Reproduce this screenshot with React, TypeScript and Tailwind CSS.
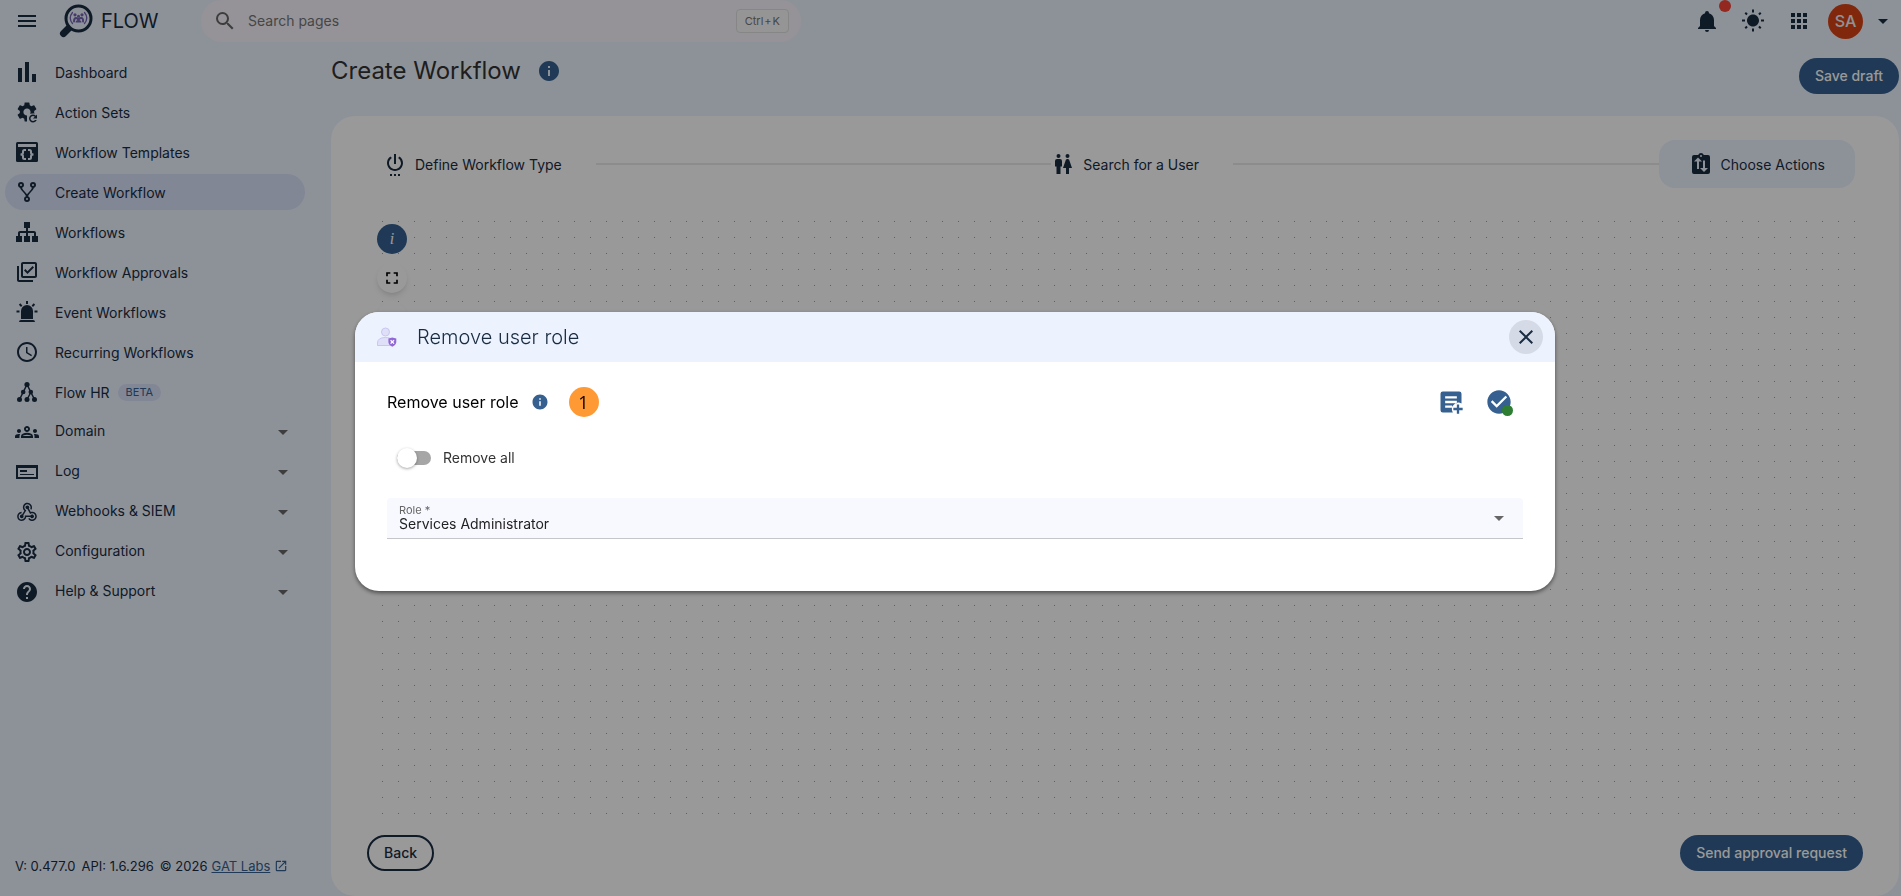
import { useState, type ReactNode } from "react";
import {
  MdAccessTime,
  MdApps,
  MdArrowDropDown,
  MdCheckCircle,
  MdClose,
  MdFullscreen,
  MdHelp,
  MdInfo,
  MdMenu,
  MdOpenInNew,
  MdOutlineGroups,
  MdOutlineLibraryAddCheck,
  MdOutlineSettings,
  MdSearch,
  MdSettings,
  MdSettingsPower,
  MdWbSunny,
} from "react-icons/md";

type NavItem = {
  label: string;
  icon: ReactNode;
  active?: boolean;
  badge?: string;
  expandable?: boolean;
};

function Icon({ d, className = "size-6" }: { d: string; className?: string }) {
  return (
    <svg viewBox="0 0 24 24" fill="currentColor" className={className} aria-hidden="true">
      <path fillRule="evenodd" d={d} />
    </svg>
  );
}

const paths = {
  poll: "M3,22V8H7V22H3M10,22V2H14V22H10M17,22V14H21V22H17Z",
  fork: "M6,2A3,3 0 0,1 9,5C9,6.28 8.19,7.38 7.06,7.81C7.15,8.27 7.39,8.83 8,9.63C9,10.92 11,12.83 12,14.17C13,12.83 15,10.92 16,9.63C16.61,8.83 16.85,8.27 16.94,7.81C15.81,7.38 15,6.28 15,5A3,3 0 0,1 18,2A3,3 0 0,1 21,5C21,6.32 20.14,7.45 18.95,7.85C18.87,8.37 18.64,9 18,9.83C17,11.17 15,13.08 14,14.38C13.39,15.17 13.15,15.73 13.06,16.19C14.19,16.62 15,17.72 15,19A3,3 0 0,1 12,22A3,3 0 0,1 9,19C9,17.72 9.81,16.62 10.94,16.19C10.85,15.73 10.61,15.17 10,14.38C9,13.08 7,11.17 6,9.83C5.36,9 5.13,8.37 5.05,7.85C3.86,7.45 3,6.32 3,5A3,3 0 0,1 6,2M6,4A1,1 0 0,0 5,5A1,1 0 0,0 6,6A1,1 0 0,0 7,5A1,1 0 0,0 6,4M18,4A1,1 0 0,0 17,5A1,1 0 0,0 18,6A1,1 0 0,0 19,5A1,1 0 0,0 18,4M12,18A1,1 0 0,0 11,19A1,1 0 0,0 12,20A1,1 0 0,0 13,19A1,1 0 0,0 12,18Z",
  sitemap: "M9,2V8H11V11H5C3.89,11 3,11.89 3,13V16H1V22H7V16H5V13H11V16H9V22H15V16H13V13H19V16H17V22H23V16H21V13C21,11.89 20.11,11 19,11H13V8H15V2H9Z",
  siren: "M6,6.9L3.87,4.78L5.28,3.37L7.4,5.5L6,6.9M13,1V4H11V1H13M20.13,4.78L18,6.9L16.6,5.5L18.72,3.37L20.13,4.78M4.5,10.5V12.5H1.5V10.5H4.5M19.5,10.5H22.5V12.5H19.5V10.5M6,20H18A2,2 0 0,1 20,22H4A2,2 0 0,1 6,20M12,5A6,6 0 0,1 18,11V19H6V11A6,6 0 0,1 12,5Z",
  log: "M1,5H23V19H1V5M3,8V17H21V8H3M5,10H12V12H5V10M5,14H19V15H5V14Z",
  webhook: "M10.46,19C9,21.07 6.15,21.59 4.09,20.15C2.04,18.71 1.56,15.84 3,13.75C3.87,12.5 5.21,11.83 6.58,11.77L6.63,13.2C5.72,13.27 4.84,13.74 4.27,14.56C3.27,16 3.58,17.94 4.95,18.91C6.33,19.87 8.26,19.5 9.26,18.07C9.57,17.62 9.75,17.13 9.82,16.63V15.62L15.4,15.58L15.47,15.47C16,14.55 17.15,14.23 18.05,14.75C18.95,15.27 19.26,16.43 18.73,17.35C18.2,18.26 17.04,18.58 16.14,18.06C15.73,17.83 15.44,17.46 15.31,17.04L11.24,17.06C11.13,17.73 10.87,18.38 10.46,19M17.74,11.86C20.27,12.17 22.07,14.44 21.76,16.93C21.45,19.43 19.15,21.2 16.62,20.89C15.13,20.71 13.9,19.86 13.19,18.68L14.43,17.96C14.92,18.73 15.75,19.28 16.75,19.41C18.5,19.62 20.05,18.43 20.26,16.76C20.47,15.09 19.23,13.56 17.5,13.35C16.96,13.29 16.44,13.36 15.97,13.53L15.12,13.97L12.54,9.2H12.32C11.26,9.16 10.41,8.29 10.44,7.25C10.47,6.21 11.4,5.4 12.45,5.44C13.5,5.5 14.33,6.35 14.3,7.39C14.28,7.83 14.11,8.23 13.84,8.54L15.74,12.05C16.36,11.85 17.04,11.78 17.74,11.86M8.25,9.14C7.25,6.79 8.31,4.1 10.62,3.12C12.94,2.14 15.62,3.25 16.62,5.6C17.21,6.97 17.09,8.47 16.42,9.67L15.18,8.95C15.6,8.14 15.67,7.15 15.27,6.22C14.59,4.62 12.78,3.85 11.23,4.5C9.67,5.16 8.97,7 9.65,8.6C9.93,9.26 10.4,9.77 10.97,10.11L11.36,10.32L8.29,15.31C8.32,15.36 8.36,15.42 8.39,15.5C8.88,16.41 8.54,17.56 7.62,18.05C6.71,18.54 5.56,18.18 5.06,17.24C4.57,16.31 4.91,15.16 5.83,14.67C6.22,14.46 6.65,14.41 7.06,14.5L9.37,10.73C8.9,10.3 8.5,9.76 8.25,9.14Z",
  bell: "M21,19V20H3V19L5,17V11C5,7.9 7.03,5.17 10,4.29C10,4.19 10,4.1 10,4A2,2 0 0,1 12,2A2,2 0 0,1 14,4C14,4.1 14,4.19 14,4.29C16.97,5.17 19,7.9 19,11V17L21,19M14,21A2,2 0 0,1 12,23A2,2 0 0,1 10,21H14Z",
  people: "M7.5,2A2,2 0 0,1 9.5,4A2,2 0 0,1 7.5,6A2,2 0 0,1 5.5,4A2,2 0 0,1 7.5,2M6,7H9A2,2 0 0,1 11,9V14.5H9.5V22H5.5V14.5H4V9A2,2 0 0,1 6,7M16.5,2A2,2 0 0,1 18.5,4A2,2 0 0,1 16.5,6A2,2 0 0,1 14.5,4A2,2 0 0,1 16.5,2M15,22V16H12L14.59,8.41C14.84,7.59 15.6,7 16.5,7C17.4,7 18.16,7.59 18.41,8.41L21,16H18V22H15Z",
  noteAdd: "M5,3H19A2,2 0 0,1 21,5V13.2A5.6,5.6 0 0,0 13.6,21H5A2,2 0 0,1 3,19V5A2,2 0 0,1 5,3M7,7V9H17V7H7M7,11V13H17V11H7M7,15V17H13V15H7M17,14.2H19V17H22V19H19V22H17V19H14V17H17V14.2Z",
};

// gear with its lower right corner cut away for the refresh arrow
function GearRefreshIcon() {
  return (
    <svg viewBox="0 0 24 24" fill="currentColor" className="size-6" aria-hidden="true">
      <mask id="gear-cut">
        <rect width="24" height="24" fill="white" />
        <path d="M12 14 L24 13 V24 H12 Z" fill="black" />
      </mask>
      <g mask="url(#gear-cut)">
        <MdSettings size={24} />
      </g>
      <path d="M18 14.5C19.11 14.5 20.11 14.95 20.83 15.67L22 14.5V18.5H18L19.77 16.73C19.32 16.28 18.69 16 18 16C16.62 16 15.5 17.12 15.5 18.5C15.5 19.88 16.62 21 18 21C18.82 21 19.55 20.61 20 20H21.71C21.12 21.47 19.68 22.5 18 22.5C15.79 22.5 14 20.71 14 18.5C14 16.29 15.79 14.5 18 14.5Z" />
    </svg>
  );
}

function TemplateIcon() {
  return (
    <svg viewBox="0 0 24 24" className="size-6" aria-hidden="true">
      <rect x="1" y="2" width="22" height="20" rx="1.5" fill="currentColor" />
      <path d="M3 4h18v3H3z" fill="#ecf3ff" />
      <g fill="none" stroke="#ecf3ff" strokeWidth="2">
        <path d="M11 10H9.500Q8 10 8 11.500v1.300Q8 14.500 5.500 14.500Q8 14.500 8 16.200v1.300Q8 19 9.500 19H11" />
        <path d="M13 10h1.500Q16 10 16 11.500v1.300Q16 14.500 18.500 14.500Q16 14.500 16 16.200v1.300Q16 19 14.500 19H13" />
      </g>
    </svg>
  );
}

function TreeIcon() {
  return (
    <svg viewBox="0 0 24 24" fill="currentColor" className="size-6" aria-hidden="true">
      <path d="M12 4.500L4.500 19.500M12 4.500L19.500 19.500M16 12L12 19.500" stroke="currentColor" strokeWidth="1.500" fill="none" />
      <circle cx="12" cy="4.500" r="2.600" />
      <circle cx="8.200" cy="12" r="2.300" />
      <circle cx="15.800" cy="12" r="2.300" />
      <circle cx="4.500" cy="19.500" r="2.500" />
      <circle cx="12" cy="19.500" r="2.500" />
      <circle cx="19.500" cy="19.500" r="2.500" />
    </svg>
  );
}

function ClipboardFlowIcon() {
  return (
    <svg viewBox="0 0 24 24" className="size-6" aria-hidden="true">
      <path
        fill="currentColor"
        fillRule="evenodd"
        d="M5 3H9.200A3 3 0 0 1 14.800 3H19A2 2 0 0 1 21 5V20A2 2 0 0 1 19 22H5A2 2 0 0 1 3 20V5A2 2 0 0 1 5 3M12 3A1 1 0 0 0 12 5A1 1 0 0 0 12 3Z"
      />
      <path fill="#ecf3ff" d="M9 5.500L13 9.500H10V17H8V9.500H5ZM15 20L11 16H14V8.500H16V16H19Z" />
    </svg>
  );
}

function Logo() {
  return (
    <svg viewBox="0 0 34 34" className="size-[34px]" aria-hidden="true">
      <path d="M13 21L4.500 29.500" stroke="#1a2c42" strokeWidth="7" strokeLinecap="round" />
      <circle cx="19.500" cy="14.500" r="12.500" fill="#ecf3ff" stroke="#1a2c42" strokeWidth="3" />
      <g fill="none" stroke="#7565b5" strokeWidth="1.300" strokeLinecap="round">
        <path d="M13.500 8.500Q9 14 13.500 19.500M25.500 8.500Q30 14 25.500 19.500" />
        <path d="M15 17.500Q15 14 17 14T19.500 16.500Q19.500 14 22 14T24 17.500" strokeWidth="2" />
      </g>
      <g fill="#7565b5">
        <circle cx="16" cy="10.800" r="1.600" />
        <circle cx="19.500" cy="12.200" r="1.500" />
        <circle cx="23" cy="10.800" r="1.600" />
        <path d="M16.500 18.500q0-2.500 3-2.500t3 2.500z" />
      </g>
    </svg>
  );
}

function UserRoleIcon() {
  return (
    <svg viewBox="0 0 20 20" className="size-5" aria-hidden="true">
      <g fill="#e0dff8" stroke="#c9c6f0">
        <circle cx="8.500" cy="5" r="4" />
        <path d="M.500 18.500V16Q.500 10.500 8.500 10.500T16 16V18.500Z" />
      </g>
      <path d="M15.300 10.500L19.300 11.600V15Q19 18 15.300 19.800Q11.600 18 11.400 15V11.600Z" fill="#9268d6" />
      <path d="M13.600 13.200l3.400 3.400m0-3.400l-3.400 3.400" stroke="#fff" strokeWidth="1.300" />
    </svg>
  );
}

const navItems: NavItem[] = [
  { label: "Dashboard", icon: <Icon d={paths.poll} /> },
  { label: "Action Sets", icon: <GearRefreshIcon /> },
  { label: "Workflow Templates", icon: <TemplateIcon /> },
  { label: "Create Workflow", icon: <Icon d={paths.fork} />, active: true },
  { label: "Workflows", icon: <Icon d={paths.sitemap} /> },
  { label: "Workflow Approvals", icon: <MdOutlineLibraryAddCheck size={24} /> },
  { label: "Event Workflows", icon: <Icon d={paths.siren} /> },
  { label: "Recurring Workflows", icon: <MdAccessTime size={24} /> },
  { label: "Flow HR", icon: <TreeIcon />, badge: "BETA" },
  { label: "Domain", icon: <MdOutlineGroups size={24} />, expandable: true },
  { label: "Log", icon: <Icon d={paths.log} />, expandable: true },
  { label: "Webhooks & SIEM", icon: <Icon d={paths.webhook} />, expandable: true },
  { label: "Configuration", icon: <MdOutlineSettings size={24} />, expandable: true },
  { label: "Help & Support", icon: <MdHelp size={24} />, expandable: true },
];

function Header() {
  return (
    <header className="flex h-[42px] items-center">
      <div className="flex w-[201px] shrink-0 items-center pl-[15px]">
        <button aria-label="Toggle menu">
          <MdMenu size={24} />
        </button>
        <span className="ml-5">
          <Logo />
        </span>
        <span className="ml-2 text-xl">FLOW</span>
      </div>

      {/* Search */}
      <div className="flex h-[42px] w-[600px] items-center rounded-full bg-[#f8f5fd] px-3 text-[#666]">
        <MdSearch size={24} />
        <input
          type="search"
          aria-label="Search pages"
          placeholder="Search pages"
          className="ml-[11px] min-w-0 flex-1 bg-transparent text-sm outline-none placeholder:text-[#757575]"
        />
        <kbd className="flex h-6 items-center gap-px rounded border border-[#e0e0e0] bg-[#faf8fb] px-2 font-[Inter,sans-serif] text-[11px] text-[#757575]">
          <span>Ctrl</span>
          <span>+</span>
          <span>K</span>
        </kbd>
      </div>

      <div className="ml-auto flex items-center pr-1.5">
        <button aria-label="Notifications" className="relative mr-[22px]">
          <Icon d={paths.bell} />
          <span className="absolute -top-[9px] -right-3 size-3 rounded-full bg-[#f44336]" />
        </button>
        <button aria-label="Toggle theme" className="mr-[22px]">
          <MdWbSunny size={24} />
        </button>
        <button aria-label="Apps" className="mr-[17px]">
          <MdApps size={24} />
        </button>
        <button className="flex items-center gap-2" aria-label="Account">
          <span className="flex size-[35px] items-center justify-center rounded-full bg-[#d84315] text-base font-medium text-[#ecf3ff]">
            SA
          </span>
          <MdArrowDropDown size={24} />
        </button>
      </div>
    </header>
  );
}

function Sidebar() {
  return (
    <aside className="flex w-[331px] shrink-0 flex-col">
      <nav className="mt-3 flex w-[305px] flex-col gap-1 pl-[5px]">
        {navItems.map((item) => (
          <a
            key={item.label}
            href="#"
            className={`flex h-9 items-center rounded-full px-2.5 text-sm ${item.active ? "bg-[#d9e1f8]" : ""}`}
          >
            {item.icon}
            <span className={`ml-4 ${item.expandable ? "pb-0.5" : "pt-0.5"}`}>{item.label}</span>
            {item.badge && (
              <span className="ml-2 rounded-full bg-[#d9e1f8] px-2 text-[11px] leading-[17px] text-[#35608f]">
                {item.badge}
              </span>
            )}
            {item.expandable && <MdArrowDropDown size={24} className="ml-auto text-[#666]" />}
          </a>
        ))}
      </nav>

      <footer className="mt-auto mb-5 flex items-center gap-1.5 pl-[15px] text-[13px] leading-5">
        <span>V: 0.477.0</span>
        <span>API: 1.6.296</span>
        <span className="flex items-center gap-1">
          © 2026
          <a href="#" className="flex items-center gap-1 text-[#35608f]">
            <span className="underline">GAT Labs</span>
            <MdOpenInNew size={14} />
          </a>
        </span>
      </footer>
    </aside>
  );
}

function Stepper() {
  return (
    <ol className="mr-2 -ml-3.5 flex h-12 items-center text-sm">
      <li className="flex items-center gap-2 px-[30px]">
        <MdSettingsPower size={24} />
        <span className="pt-0.5">Define Workflow Type</span>
      </li>
      <li aria-hidden="true" className="ml-1 flex-1">
        <div className="-mr-[30px] h-0.5 bg-[#e9e9e9]" />
      </li>
      <li className="flex items-center gap-2 px-[30px]">
        <Icon d={paths.people} />
        <span className="pt-0.5">Search for a User</span>
      </li>
      <li aria-hidden="true" className="ml-1 flex-1">
        <div className="h-0.5 bg-[#e9e9e9]" />
      </li>
      <li className="flex h-full items-center gap-2 rounded-2xl bg-[#ecf3ff] px-[30px]">
        <ClipboardFlowIcon />
        <span className="pt-0.5">Choose Actions</span>
      </li>
    </ol>
  );
}

function Canvas() {
  return (
    <div className="relative mt-[18px] flex-1">
      <svg className="absolute inset-0 size-full" aria-hidden="true">
        <pattern id="dots" width="16" height="16" patternUnits="userSpaceOnUse">
          <rect x="15" y="15" width="1" height="1" fill="#a0a0a0" />
        </pattern>
        <rect width="100%" height="100%" fill="url(#dots)" />
      </svg>
      <div className="relative flex w-[50px] flex-col items-center gap-[9px] pt-[18px]">
        <button
          aria-label="Canvas info"
          className="size-[30px] rounded-full bg-[#35608f] font-['Liberation_Serif',serif] text-base text-white italic"
        >
          i
        </button>
        <button aria-label="Fit view" className="flex size-[30px] items-center justify-center rounded-full bg-white text-black shadow-md">
          <MdFullscreen size={20} />
        </button>
        <button aria-label="Zoom in" className="size-[30px] rounded-full bg-white text-black shadow-md">
          +
        </button>
      </div>
    </div>
  );
}

function RemoveRoleDialog({ onClose }: { onClose: () => void }) {
  const [removeAll, setRemoveAll] = useState(false);

  return (
    <div className="fixed inset-0 z-10 flex items-center justify-center bg-black/40 pt-[7px] pl-[9px]">
      <div
        role="dialog"
        aria-labelledby="dialog-title"
        className="w-[1200px] max-w-[95%] overflow-hidden rounded-3xl bg-white shadow-[0_2px_4px_rgba(0,0,0,0.5)]"
      >
        {/* Title bar */}
        <div className="flex h-[50px] items-center bg-[#ecf3ff] pr-3 pl-[22px]">
          <UserRoleIcon />
          <h2 id="dialog-title" className="ml-5 text-xl font-light text-[#1a2c42]">
            Remove user role
          </h2>
          <button
            aria-label="Close"
            onClick={onClose}
            className="ml-auto flex size-[34px] items-center justify-center rounded-full bg-[#d5dbe6] text-[#1a2c42]"
          >
            <MdClose size={24} />
          </button>
        </div>

        <div className="px-8 pt-[25px] pb-[52px]">
          <div className="flex h-[30px] items-center">
            <h3 className="text-base text-black">Remove user role</h3>
            <MdInfo size={18} className="ml-3 text-[#35608f]" />
            <span className="ml-5 flex size-[30px] items-center justify-center rounded-full bg-[#ff9933] font-['Open_Sans',sans-serif] text-lg text-black">
              1
            </span>
            <button aria-label="Add note" className="ml-auto text-[#35608f]">
              <Icon d={paths.noteAdd} className="size-7" />
            </button>
            <button aria-label="Status" className="relative mr-2.5 ml-5 text-[#35608f]">
              <MdCheckCircle size={28} />
              <span className="absolute right-0 bottom-0 size-[11px] rounded-full bg-[#2e7d32]" />
            </button>
          </div>

          {/* Toggle */}
          <label className="mt-[30px] flex h-[22px] w-fit cursor-pointer items-center pl-2.5 text-sm text-[#333]">
            <span className="relative flex h-5 w-[34px] items-center">
              <input
                type="checkbox"
                checked={removeAll}
                onChange={(e) => setRemoveAll(e.target.checked)}
                className="peer absolute inset-0 opacity-0"
              />
              <span className="h-3.5 w-full rounded-full bg-[#a6a6a6] peer-checked:bg-[#35608f]" />
              <span className="absolute left-0 size-5 rounded-full bg-white shadow-[0_1px_3px_rgba(0,0,0,0.35)] peer-checked:left-4" />
            </span>
            <span className="ml-3">Remove all</span>
          </label>

          {/* Role */}
          <div className="relative mt-[29px]">
            <label htmlFor="role" className="absolute top-1 left-3 text-[11px] leading-4 text-[#666]">
              Role *
            </label>
            <select
              id="role"
              required
              className="h-[41px] w-full appearance-none rounded-t border-b border-[#c4c6cc] bg-[#f8f9ff] px-3 pt-3 text-sm text-[#222] outline-none"
            >
              <option>Services Administrator</option>
            </select>
            <MdArrowDropDown size={24} className="pointer-events-none absolute top-2 right-3 text-[#666]" />
          </div>
        </div>
      </div>
    </div>
  );
}

export default function App() {
  const [open, setOpen] = useState(true);

  return (
    <div className="flex min-h-screen flex-col bg-[#ecf3ff] font-[Inter,sans-serif] text-[#1a2c42]">
      <Header />
      <div className="flex flex-1">
        <Sidebar />

        <main className="flex min-w-0 flex-1 flex-col pr-0.5">
          {/* Page title */}
          <div className="flex h-[74px] items-start">
            <div className="mt-3 flex h-[34px] items-center gap-4">
              <h1 className="text-2xl text-[#333]">Create Workflow</h1>
              <MdInfo size={24} className="text-[#35608f]" />
            </div>
            <button className="mt-4 ml-auto h-9 rounded-full bg-[#35608f] px-4 text-sm font-medium text-white">
              Save draft
            </button>
          </div>

          <section className="flex flex-1 flex-col rounded-3xl bg-white px-9 pt-6 pb-[25px]">
            <Stepper />
            <Canvas />
            <div className="mt-3 flex justify-between">
              <button className="h-9 rounded-full border-2 border-[#1a2c42] px-[15px] text-sm font-medium">Back</button>
              <button className="h-9 rounded-full bg-[#35608f] px-4 text-sm font-medium text-white">
                Send approval request
              </button>
            </div>
          </section>
        </main>
      </div>
      {open && <RemoveRoleDialog onClose={() => setOpen(false)} />}
    </div>
  );
}
